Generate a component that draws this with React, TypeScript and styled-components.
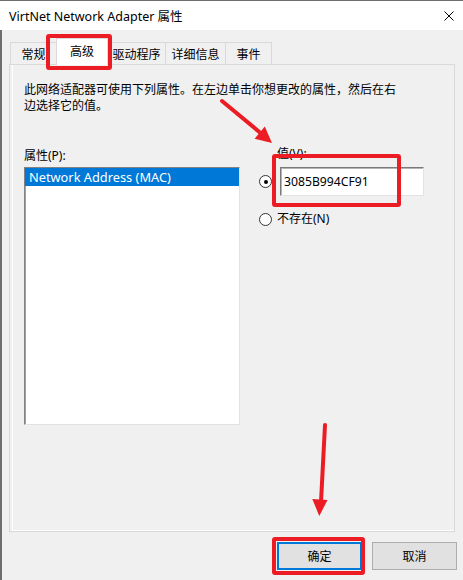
import styled, { createGlobalStyle } from "styled-components"

const GlobalStyle = createGlobalStyle`
  html, body {
    margin: 0;
    padding: 0;
    background: #f0f0f0;
  }
  body {
    font-family: "Noto Sans", "Noto Sans CJK SC", sans-serif;
    font-size: 12px;
    color: #000;
  }
`

const Window = styled.div`
  position: relative;
  width: 463px;
  height: 580px;
  background: #f0f0f0;
  overflow: hidden;
  display: flex;
  flex-direction: column;
`

const TitleBar = styled.div`
  height: 29px;
  border-top: 1px solid #6e6e6e;
  background: #fff;
  display: flex;
  align-items: center;
  justify-content: space-between;
  padding: 0 9px;
  font-size: 12.5px;
`

const Body = styled.div`
  flex: 1;
  box-shadow: inset 2px 0 0 #6e6e6e;
  padding: 8px 8px 0 9px;
  display: flex;
  flex-direction: column;
`

const TabStrip = styled.div`
  position: relative;
  z-index: 2;
  display: flex;
  align-items: flex-end;
  height: 26px;
  margin-left: 1px;
`

const Tab = styled.div<{ $w: number; $active?: boolean }>`
  position: relative;
  box-sizing: border-box;
  width: ${p => p.$w}px;
  height: ${p => (p.$active ? 27 : 22)}px;
  margin-bottom: ${p => (p.$active ? -1 : 0)}px;
  z-index: ${p => (p.$active ? 1 : 0)};
  background: ${p => (p.$active ? "#fff" : "#f0f0f0")};
  border: 1px solid #d9d9d9;
  border-bottom: none;
  display: flex;
  align-items: center;
  justify-content: center;
  padding-bottom: ${p => (p.$active ? 2 : 0)}px;
  & + & {
    margin-left: -1px;
  }
`

const Panel = styled.div`
  box-sizing: border-box;
  height: 468px;
  border: 1px solid #d9d9d9;
  padding-left: 2px;
  display: flex;
`

const Page = styled.div`
  flex: 1;
  border-left: 1px solid #fff;
  border-bottom: 1px solid #fff;
  padding: 17px 0 0 11px;
`

const Desc = styled.p`
  margin: 0;
  max-width: 380px;
  line-height: 16px;
`

const Columns = styled.div`
  display: flex;
  margin-top: 32px;
`

const LeftCol = styled.div`
  width: 216px;
  padding-top: 2px;
`

const Label = styled.div<{ $indent?: number }>`
  line-height: 16px;
  padding-left: ${p => p.$indent ?? 0}px;
`

const ListBox = styled.div`
  box-sizing: border-box;
  margin-top: 3px;
  height: 258px;
  background: #fff;
  border-style: solid;
  border-width: 1px;
  border-color: #828282 #e3e3e3 #e3e3e3 #828282;
  box-shadow: inset 1px 0 0 #a0a0a0;
`

const ListItem = styled.div<{ $selected?: boolean }>`
  height: 18px;
  line-height: 18px;
  padding-left: 4px;
  font-size: 12.8px;
  background: ${p => (p.$selected ? "#0078d7" : "transparent")};
  color: ${p => (p.$selected ? "#fff" : "#000")};
`

const RightCol = styled.div`
  margin-left: 19px;
  display: flex;
  flex-direction: column;
`

const RadioRow = styled.div<{ $gap: number; $top: number }>`
  display: flex;
  align-items: center;
  gap: ${p => p.$gap}px;
  margin-top: ${p => p.$top}px;
  line-height: 16px;
`

const Radio = styled.span<{ $checked?: boolean }>`
  box-sizing: border-box;
  width: 13px;
  height: 13px;
  border-radius: 50%;
  border: 1px solid #333;
  background: #fff;
  display: flex;
  align-items: center;
  justify-content: center;
  &::after {
    content: "";
    width: 4px;
    height: 4px;
    border-radius: 50%;
    background: ${p => (p.$checked ? "#000" : "transparent")};
  }
`

const TextBox = styled.div`
  position: relative;
  box-sizing: border-box;
  width: 144px;
  height: 29px;
  background: #fff;
  border-style: solid;
  border-width: 1px;
  border-color: #7a7a7a #e3e3e3 #e3e3e3 #7a7a7a;
  box-shadow: inset 1px 1px 0 #b4b4b4;
  padding-left: 3px;
  display: flex;
  align-items: center;
  font-size: 12.2px;
`

const ButtonRow = styled.div`
  display: flex;
  justify-content: flex-end;
  gap: 10px;
  margin-top: 10px;
  margin-right: -2px;
`

const Button = styled.div<{ $default?: boolean }>`
  position: relative;
  box-sizing: border-box;
  width: 85px;
  height: 28px;
  background: #e1e1e1;
  border: ${p => (p.$default ? "2px solid #0078d7" : "1px solid #adadad")};
  display: flex;
  align-items: center;
  justify-content: center;
`

const Callout = styled.div<{ $inset: string }>`
  position: absolute;
  inset: ${p => p.$inset};
  border: 4px solid #ec1c24;
  border-radius: 3px;
  pointer-events: none;
  z-index: 5;
`

const Arrows = styled.svg`
  position: absolute;
  left: 0;
  top: 0;
  pointer-events: none;
  z-index: 6;
`

const tabs = [
  { label: "常规", w: 47 },
  { label: "高级", w: 52, active: true },
  { label: "驱动程序", w: 59 },
  { label: "详细信息", w: 61 },
  { label: "事件", w: 47 },
]

const App = () => {
  return (
    <Window>
      <GlobalStyle />
      <TitleBar>
        <span>VirtNet Network Adapter 属性</span>
        <svg width="10" height="10" viewBox="0 0 10 10">
          <path d="M0.5 0.5 L9.5 9.5 M9.5 0.5 L0.5 9.5" stroke="#000" strokeWidth="1" />
        </svg>
      </TitleBar>
      <Body>
        <TabStrip>
          {tabs.map(t => (
            <Tab key={t.label} $w={t.w} $active={t.active}>
              {t.label}
              {t.active && <Callout $inset="-5px -5px -5px -11px" />}
            </Tab>
          ))}
        </TabStrip>
        <Panel>
          <Page>
            <Desc>此网络适配器可使用下列属性。在左边单击你想更改的属性，然后在右边选择它的值。</Desc>
            <Columns>
              <LeftCol>
                <Label>属性(P):</Label>
                <ListBox>
                  <ListItem $selected>Network Address (MAC)</ListItem>
                </ListBox>
              </LeftCol>
              <RightCol>
                <Label $indent={18}>值(V):</Label>
                <RadioRow $gap={8} $top={5}>
                  <Radio $checked />
                  <TextBox>
                    3085B994CF91
                    <Callout $inset="-14px 22px -12px -9px" />
                  </TextBox>
                </RadioRow>
                <RadioRow $gap={5} $top={15}>
                  <Radio />
                  <span>不存在(N)</span>
                </RadioRow>
              </RightCol>
            </Columns>
          </Page>
        </Panel>
        <ButtonRow>
          <Button $default>
            确定
            <Callout $inset="-7px -5px -7px -7px" />
          </Button>
          <Button>取消</Button>
        </ButtonRow>
      </Body>
      <Arrows width="463" height="580" viewBox="0 0 463 580">
        <line x1="222" y1="101" x2="263" y2="135" stroke="#ec1c24" strokeWidth="4" strokeLinecap="round" />
        <polygon points="272,143 254.6,138.8 264.8,126.6" fill="#ec1c24" />
        <line x1="325" y1="425" x2="321" y2="502" stroke="#ec1c24" strokeWidth="4" strokeLinecap="round" />
        <polygon points="319.3,516 312.3,499 327.5,500" fill="#ec1c24" />
      </Arrows>
    </Window>
  )
}

export default App
